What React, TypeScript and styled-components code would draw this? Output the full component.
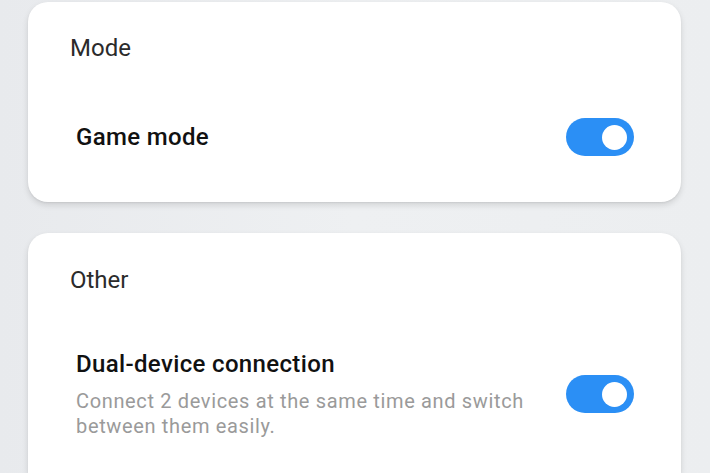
import React from 'react'
import styled, { createGlobalStyle } from 'styled-components'

const GlobalStyle = createGlobalStyle`
  html, body {
    margin: 0;
    padding: 0;
    height: 100%;
    overflow: hidden;
    background: linear-gradient(90deg, #e8eaed 0%, #eef0f2 50%, #eceef0 100%);
    font-family: Roboto, 'Noto Sans', sans-serif;
  }
`

const Page = styled.main`
  display: flex;
  flex-direction: column;
  gap: 31px;
  height: 100vh;
  box-sizing: border-box;
  padding: 2px 29px 0 28px;
`

// $open: card continues below the fold, so it fills the rest and has no bottom corners
const Card = styled.section<{ $open?: boolean; $pad: number }>`
  background: #fff;
  border-radius: ${p => (p.$open ? '20px 20px 0 0' : '20px')};
  box-shadow: 0 3px 6px rgba(0, 0, 0, 0.12), 0 1px 2px rgba(0, 0, 0, 0.06);
  padding: ${p => p.$pad}px 47px 0 42px;
  box-sizing: border-box;
  height: ${p => (p.$open ? 'auto' : '200px')};
  flex: ${p => (p.$open ? '1' : 'none')};
`

const SectionTitle = styled.h2`
  margin: 0;
  font-size: 24px;
  line-height: 30px;
  font-weight: 400;
  color: #2b2b2b;
`

const Row = styled.div<{ $top: number }>`
  display: flex;
  align-items: center;
  justify-content: space-between;
  gap: 24px;
  padding: ${p => p.$top}px 0 0 6px;
`

const Texts = styled.div`
  display: flex;
  flex-direction: column;
  gap: 10px;
`

const Label = styled.div`
  font-size: 24px;
  line-height: 30px;
  font-weight: 500;
  letter-spacing: 0.35px;
  color: #111;
`

const Hint = styled.div`
  font-size: 20px;
  line-height: 25px;
  letter-spacing: 0.65px;
  color: #9a9a9a;
  max-width: 470px;
`

const Switch = styled.span<{ $on: boolean }>`
  flex: none;
  display: flex;
  align-items: center;
  justify-content: ${p => (p.$on ? 'flex-end' : 'flex-start')};
  width: 68px;
  height: 38px;
  padding: 0 7px;
  box-sizing: border-box;
  border-radius: 19px;
  background: ${p => (p.$on ? '#2b8ff5' : '#cfd2d6')};

  &::after {
    content: '';
    width: 25px;
    height: 25px;
    border-radius: 50%;
    background: #fff;
  }
`

export default function App () {
  return (
    <>
      <GlobalStyle />
      <Page>
        <Card $pad={31}>
          <SectionTitle>Mode</SectionTitle>
          <Row $top={55}>
            <Texts>
              <Label>Game mode</Label>
            </Texts>
            <Switch $on />
          </Row>
        </Card>
        <Card $pad={32} $open>
          <SectionTitle>Other</SectionTitle>
          <Row $top={54}>
            <Texts>
              <Label>Dual-device connection</Label>
              <Hint>Connect 2 devices at the same time and switch between them easily.</Hint>
            </Texts>
            <Switch $on />
          </Row>
        </Card>
      </Page>
    </>
  )
}
